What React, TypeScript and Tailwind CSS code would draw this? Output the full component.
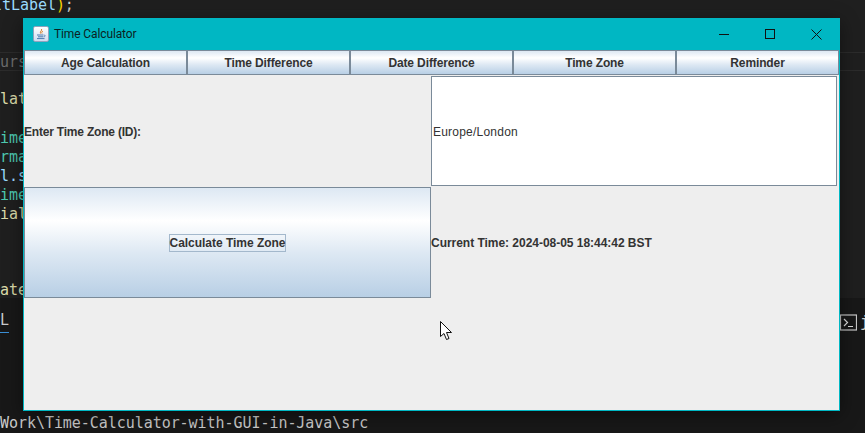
const codeLines = [
  { text: "" },
  { text: "" },
  { text: "" },
  { text: "urs", color: "text-[#6b6b6b]", sticky: true },
  { text: "" },
  { text: "lat", color: "text-[#dcdcaa]" },
  { text: "" },
  { text: "ime", color: "text-[#4ec9b0]" },
  { text: "rma", color: "text-[#4ec9b0]" },
  { text: "l.s", color: "text-[#9cdcfe]" },
  { text: "ime", color: "text-[#4ec9b0]" },
  { text: "ial", color: "text-[#dcdcaa]" },
  { text: "" },
  { text: "" },
  { text: "" },
  { text: "ate", color: "text-[#dcdcaa]" },
];

const tabs = ["Age Calculation", "Time Difference", "Date Difference", "Time Zone", "Reminder"];

function JavaIcon() {
  return (
    <div className="flex size-4 items-center justify-center rounded-[2px] border border-[#8fa3bd] bg-[linear-gradient(180deg,#ffffff,#cfdcf0)]">
      <svg width="12" height="13" viewBox="0 0 12 13" fill="none">
        <path d="M6.5 1C7.5 2.5 4.5 3.5 5.5 5.5M8 3C6.5 4 6.5 5 7 5.5" stroke="#d9822b" strokeWidth="1" />
        <path d="M2 7h6.5M3 8.8h5.5M2 10.6h7.5" stroke="#4a7bb0" strokeWidth="1" />
        <path d="M9 7.2c1.5-.4 1.8 1.4 0 1.6" stroke="#4a7bb0" strokeWidth="0.8" />
      </svg>
    </div>
  );
}

function WindowControls() {
  return (
    <div className="flex items-center">
      <div className="flex h-[32px] w-[46px] items-center justify-center">
        <svg width="10" height="10" viewBox="0 0 10 10">
          <path d="M0 5.5h10" stroke="#111" strokeWidth="1" />
        </svg>
      </div>
      <div className="flex h-[32px] w-[46px] items-center justify-center">
        <svg width="10" height="10" viewBox="0 0 10 10" fill="none">
          <rect x="0.5" y="0.5" width="9" height="9" stroke="#111" strokeWidth="1" />
        </svg>
      </div>
      <div className="flex h-[32px] w-[46px] items-center justify-center">
        <svg width="11" height="11" viewBox="0 0 11 11" fill="none">
          <path d="M0.5 0.5l10 10M10.5 0.5l-10 10" stroke="#111" strokeWidth="1" />
        </svg>
      </div>
    </div>
  );
}

export default function App() {
  const bold = "font-['Liberation_Sans',Arial,sans-serif] text-[12px] font-bold text-[#333333] whitespace-nowrap";

  return (
    <div className="relative flex h-[433px] w-[865px] flex-col overflow-hidden bg-[#1f1f1f] font-['DejaVu_Sans_Mono',monospace] text-[15px] tracking-[-0.05px]">
      {/* editor behind the window */}
      <div className="flex h-[298px] shrink-0 flex-col">
        {codeLines.map((line, i) => (
          <div
            key={i}
            className={`shrink-0 whitespace-pre ${line.color ?? ""} ${
              i === 0 ? "-ml-[7px] h-[14px] leading-[10px]" : "h-[19.1px] leading-[19px]"
            } ${line.sticky ? "border-y border-[#2c2c2c] leading-[17px]" : ""}`}
          >
            {i === 0 ? (
              <>
                <span className="text-[#9cdcfe]">ltLabel</span>
                <span className="text-[#ffd700]">)</span>
                <span className="text-[#cccccc]">;</span>
              </>
            ) : (
              line.text
            )}
          </div>
        ))}
      </div>

      {/* terminal panel */}
      <div className="flex flex-1 flex-col justify-between bg-[#181818] pt-[13px]">
        <div className="flex items-start justify-between">
          <div className="h-[22px] w-[9px] border-b border-[#3b8fd6] leading-[19px] text-[#cccccc]">L</div>
          <div className="flex items-center gap-[3px]">
            <svg width="17" height="17" viewBox="0 0 17 17" fill="none">
              <rect x="0.5" y="1" width="16" height="15" stroke="#c8c8c8" strokeWidth="1.2" />
              <path d="M4 5l3.5 3.5L4 12M8 12.5h5" stroke="#e0e0e0" strokeWidth="1.2" />
            </svg>
            <span className="w-[5px] text-[#cccccc]">j</span>
          </div>
        </div>
        <div className="h-[20px] leading-[20px] text-[#cccccc] whitespace-nowrap">Work\Time-Calculator-with-GUI-in-Java\src</div>
      </div>

      {/* java window */}
      <div className="absolute left-[23px] top-[18px] flex h-[393px] w-[817px] flex-col border border-t-0 border-[#00b7c3] bg-[#eeeeee] shadow-[0_4px_18px_rgba(0,0,0,0.45)]">
        <div className="flex h-[32px] items-center justify-between bg-[#00b7c3] pl-[9px]">
          <div className="flex items-center gap-[5px]">
            <JavaIcon />
            <span className="font-['Roboto',sans-serif] text-[12px] tracking-[-0.12px] text-[#0c1f22]">Time Calculator</span>
          </div>
          <WindowControls />
        </div>

        <div className="flex h-[25px]">
          {tabs.map((tab) => (
            <div
              key={tab}
              className="flex w-[163px] items-center justify-center border border-[#7a8a99] bg-[linear-gradient(180deg,#dde8f3_0%,#ffffff_30%,#dde8f3_60%,#b8cfe5_100%)]"
            >
              <span className={`${bold} tracking-[-0.12px]`}>{tab}</span>
            </div>
          ))}
        </div>

        <div className="grid flex-1 grid-cols-[407px_406px] grid-rows-[111px_111px_1fr] pt-px">
          <div className="flex items-center">
            <span className={`${bold} tracking-[-0.2px]`}>Enter Time Zone (ID):</span>
          </div>
          <div className="flex h-[110px] items-center border border-[#7a8a99] bg-white pl-[1px] pt-[2px]">
            <span className="font-['Liberation_Sans',Arial,sans-serif] text-[12px] tracking-[0.22px] text-[#333333]">Europe/London</span>
          </div>
          <div className="flex items-center justify-center border border-[#7a8a99] bg-[linear-gradient(180deg,#dde8f3_0%,#ffffff_30%,#dde8f3_60%,#b8cfe5_100%)]">
            <span className={`${bold} border border-[#a3b8cc] tracking-[-0.03px] leading-[16px]`}>Calculate Time Zone</span>
          </div>
          <div className="flex items-center">
            <span className={`${bold} tracking-[-0.03px]`}>Current Time: 2024-08-05 18:44:42 BST</span>
          </div>
        </div>
      </div>

      {/* mouse pointer */}
      <svg className="absolute left-[440px] top-[321px]" width="13" height="20" viewBox="0 0 13 20" fill="none">
        <path d="M0.5 0.5V15.5L4 12.5L6.5 18.5L9 17.5L6.5 11.5H11.5Z" fill="#ffffff" stroke="#111111" strokeWidth="1" />
      </svg>
    </div>
  );
}
